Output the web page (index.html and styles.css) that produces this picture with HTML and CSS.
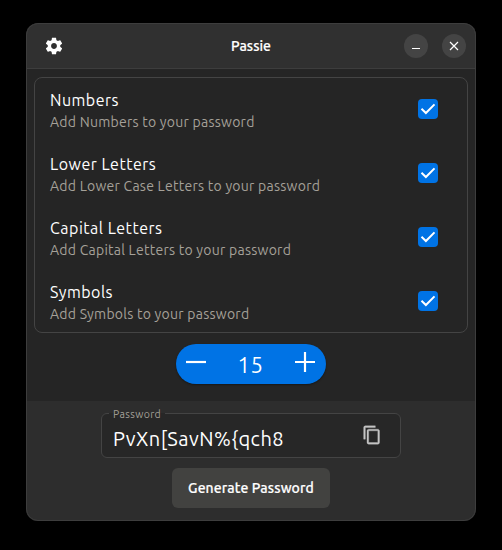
FILE: index.html
```html
<!DOCTYPE html>
<html lang="en">
<head>
<meta charset="utf-8">
<title>Passie</title>
<link rel="stylesheet" href="styles.css">
</head>
<body>
<main class="window">
  <header class="titlebar">
    <svg class="gear" viewBox="0 0 24 24"><path d="M19.43 12.98c.04-.32.07-.64.07-.98s-.03-.66-.07-.98l2.11-1.65c.19-.15.24-.42.12-.64l-2-3.46c-.12-.22-.39-.3-.61-.22l-2.49 1c-.52-.4-1.08-.73-1.69-.98l-.38-2.65C14.46 2.18 14.25 2 14 2h-4c-.25 0-.46.18-.49.42l-.38 2.65c-.61.25-1.17.59-1.69.98l-2.49-1c-.23-.09-.49 0-.61.22l-2 3.46c-.13.22-.07.49.12.64l2.11 1.65c-.04.32-.07.65-.07.98s.03.66.07.98l-2.11 1.65c-.19.15-.24.42-.12.64l2 3.46c.12.22.39.3.61.22l2.49-1c.52.4 1.08.73 1.69.98l.38 2.65c.03.24.24.42.49.42h4c.25 0 .46-.18.49-.42l.38-2.65c.61-.25 1.17-.59 1.69-.98l2.49 1c.23.09.49 0 .61-.22l2-3.46c.12-.22.07-.49-.12-.64l-2.11-1.65zM12 15.5c-1.93 0-3.5-1.57-3.5-3.5s1.57-3.5 3.5-3.5 3.500 1.570 3.500 3.500-1.570 3.500-3.500 3.500z"/></svg>
    <h1 class="title">Passie</h1>
    <div class="controls">
      <button class="control" aria-label="Minimize"><svg viewBox="0 0 24 24"><path d="M8 14.500h8"/></svg></button>
      <button class="control" aria-label="Close"><svg viewBox="0 0 24 24"><path d="M8 8l8 8M16 8l-8 8"/></svg></button>
    </div>
  </header>
  <section class="options">
    <ul class="card">
      <li class="row"><div><div class="name">Numbers</div><div class="desc">Add Numbers to your password</div></div><svg class="check" viewBox="0 0 20 20"><path d="M3.500 9.800l4.400 4.200 8.600-8.600"/></svg></li>
      <li class="row"><div><div class="name">Lower Letters</div><div class="desc">Add Lower Case Letters to your password</div></div><svg class="check" viewBox="0 0 20 20"><path d="M3.500 9.800l4.400 4.200 8.600-8.600"/></svg></li>
      <li class="row"><div><div class="name">Capital Letters</div><div class="desc">Add Capital Letters to your password</div></div><svg class="check" viewBox="0 0 20 20"><path d="M3.500 9.800l4.400 4.200 8.600-8.600"/></svg></li>
      <li class="row"><div><div class="name">Symbols</div><div class="desc">Add Symbols to your password</div></div><svg class="check" viewBox="0 0 20 20"><path d="M3.500 9.800l4.400 4.200 8.600-8.600"/></svg></li>
    </ul>
    <div class="stepper">
      <svg viewBox="0 0 20 20"><path d="M0 10h20"/></svg>
      <span class="count">15</span>
      <svg viewBox="0 0 20 20"><path d="M0 10h20M10 0v20"/></svg>
    </div>
  </section>
  <footer class="result">
    <div class="field">
      <span class="label">Password</span>
      <span class="value">PvXn[SavN%{qch8</span>
      <svg class="copy" viewBox="0 0 24 24"><path d="M16 1H4c-1.100 0-2 .9-2 2v14h2V3h12V1zm3 4H8c-1.100 0-2 .9-2 2v14c0 1.100.9 2 2 2h11c1.100 0 2-.9 2-2V7c0-1.100-.9-2-2-2zm0 16H8V7h11v14z"/></svg>
    </div>
    <button class="generate">Generate Password</button>
  </footer>
</main>
</body>
</html>
```
FILE: styles.css
```css
* { box-sizing: border-box; }

body {
  margin: 0;
  height: 550px;
  padding: 23px 26px;
  background: #000;
  color: #fff;
  font-family: Ubuntu, "Noto Sans", sans-serif;
  overflow: hidden;
}

button { border: 0; padding: 0; color: inherit; font-family: inherit; }
svg { display: block; flex: none; }

.window {
  position: relative;
  display: flex;
  flex-direction: column;
  height: 498px;
  border-radius: 12px;
  background: #252525;
  overflow: hidden;
}

.window::after {
  content: "";
  position: absolute;
  inset: 0;
  border: 1px solid #3d3d3d;
  border-radius: 12px;
  pointer-events: none;
}

.titlebar {
  display: grid;
  grid-template-columns: 1fr auto 1fr;
  align-items: center;
  height: 46px;
  padding: 0 10px 0 18px;
  background: #303030;
  border-bottom: 1px solid #3d3d3d;
}

.gear { width: 20px; height: 20px; fill: #fff; }
.title { margin: 0 8px 0 0; font-size: 14px; line-height: 20px; font-weight: 500; -webkit-text-stroke: 0.200px; }
.controls { display: flex; justify-content: flex-end; gap: 14px; }
.control { width: 24px; height: 24px; border-radius: 50%; background: #444; }
.control svg { width: 24px; height: 24px; stroke: #fff; stroke-width: 1.200; fill: none; }

.options { display: flex; flex-direction: column; align-items: center; height: 332px; padding: 8px; }

.card {
  width: 434px;
  height: 256px;
  margin: 0;
  padding: 0;
  list-style: none;
  border: 1px solid #444;
  border-radius: 8px;
}

.row { display: flex; justify-content: space-between; align-items: center; height: 64px; padding: 0 29px 0 15px; }
.name { font-size: 16px; line-height: 22px; letter-spacing: 0.500px; }
.desc { padding-top: 1px; margin-bottom: -1px; color: #a5a199; font-size: 14px; line-height: 20px; letter-spacing: 0.250px; }
.check { width: 20px; height: 20px; margin-bottom: 2px; border-radius: 4px; background: #0073e5; fill: none; stroke: #fff; stroke-width: 2; }

.stepper {
  display: flex;
  align-items: center;
  justify-content: space-between;
  width: 150px;
  height: 40px;
  margin-top: 11px;
  padding: 0 11px 0 10px;
  border-radius: 20px;
  background: #0073e5;
  box-shadow: 0 1px 2px #0006;
}
.stepper svg { width: 20px; height: 20px; margin-bottom: 4px; stroke: #fff; stroke-width: 2.200; }
.count { padding-top: 2px; font-size: 22px; line-height: 30px; letter-spacing: 0.500px; }

.result { display: flex; flex-direction: column; align-items: center; flex: 1; padding-top: 12px; background: #2d2d2d; }

.field {
  position: relative;
  display: flex;
  align-items: center;
  justify-content: space-between;
  width: 300px;
  height: 45px;
  padding: 7px 18px 0 11px;
  border: 1px solid #444;
  border-radius: 6px;
  background: #272727;
}
.label {
  position: absolute;
  top: -8px;
  left: 7px;
  padding: 0 4px;
  background: linear-gradient(#2d2d2d 7px, #272727 7px);
  color: #a5a199;
  font-size: 10.500px;
  line-height: 16px;
  letter-spacing: 0.380px;
}
.value { font-size: 20px; line-height: 28px; letter-spacing: 0.500px; }
.copy { width: 20px; height: 20px; margin-bottom: 8px; fill: #c4c4c4; stroke: #c4c4c4; stroke-width: 0.400; }

.generate {
  width: 158px;
  height: 40px;
  margin-top: 10px;
  border-radius: 6px;
  background: #424240;
  font-size: 14px;
  font-weight: 500;
  letter-spacing: 0.100px;
  -webkit-text-stroke: 0.200px;
}
```
